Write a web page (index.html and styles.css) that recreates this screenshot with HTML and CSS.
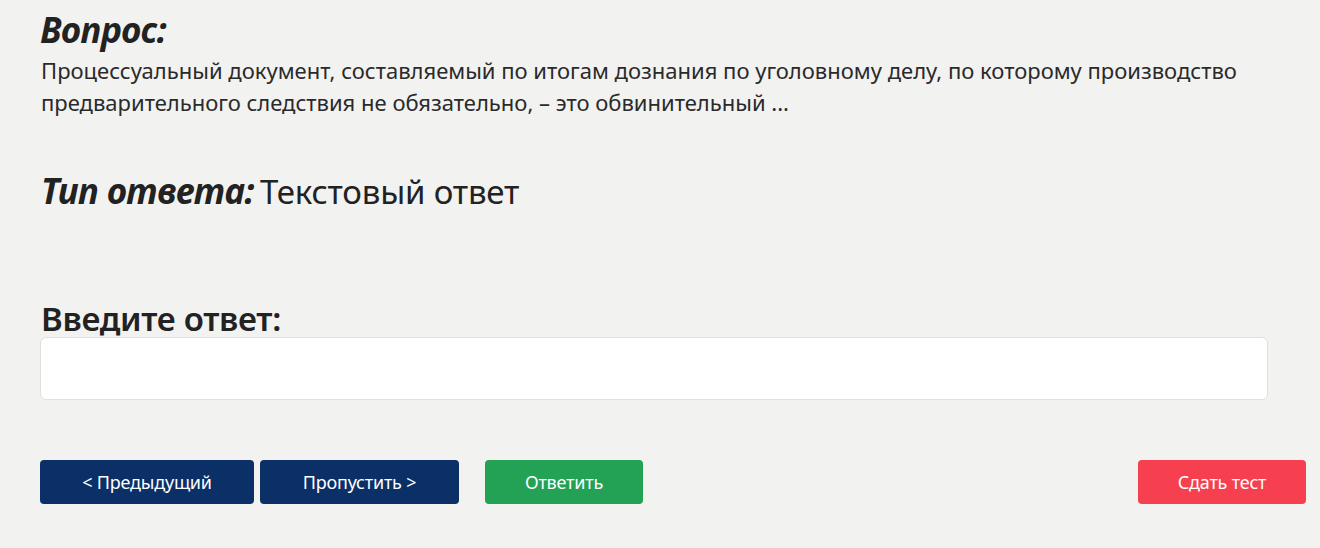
FILE: index.html
```html
<!DOCTYPE html>
<html lang="ru">
<head>
<meta charset="utf-8">
<link rel="stylesheet" href="styles.css">
</head>
<body>
<main class="page">
  <section class="question">
    <h2 class="label-italic">Вопрос:</h2>
    <p class="question-text">Процессуальный документ, составляемый по итогам дознания по уголовному делу, по которому производство предварительного следствия не обязательно, – это обвинительный ...</p>
  </section>
  <section class="type">
    <span class="label-italic">Тип ответа:</span><span class="type-value">Текстовый ответ</span>
  </section>
  <section class="answer">
    <label class="answer-label" for="ans">Введите ответ:</label>
    <input class="answer-input" id="ans" type="text">
  </section>
  <div class="actions">
    <button class="btn btn-navy btn-prev">&lt; Предыдущий</button>
    <button class="btn btn-navy btn-skip">Пропустить &gt;</button>
    <button class="btn btn-green btn-answer">Ответить</button>
    <button class="btn btn-red btn-finish">Сдать тест</button>
  </div>
</main>
</body>
</html>
```
FILE: styles.css
```css
* { box-sizing: border-box; }
html, body { margin: 0; padding: 0; }
body {
  background: #f2f2f1;
  color: #222;
  font-family: "Noto Sans", "Open Sans", sans-serif;
  width: 1320px;
  height: 548px;
  overflow: hidden;
}
.page {
  padding: 8px 14px 0 40px;
}
.label-italic {
  font-style: italic;
  font-weight: 700;
  font-size: 35px;
  margin: 0;
  line-height: 44px;
  letter-spacing: -0.5px;
}
.question-text {
  margin: 2px 0 0 1px;
  font-size: 22px;
  line-height: 32px;
  color: #2a2a2a;
  max-width: 1228px;
}
.type {
  margin-top: 51px;
  display: flex;
  align-items: baseline;
  height: 44px;
}
.type .label-italic { margin-left: 1px; }
.type-value {
  font-size: 33px;
  line-height: 44px;
  margin-left: 6px;
  letter-spacing: -0.2px;
}
.answer {
  margin-top: 86px;
  display: flex;
  flex-direction: column;
  width: 1228px;
}
.answer-label {
  font-size: 33px;
  font-weight: 600;
  line-height: 40px;
  margin-left: 1px;
  letter-spacing: -0.3px;
}
.answer-input {
  height: 63px;
  background: #fff;
  border: 1px solid #e0e0df;
  border-radius: 6px;
  margin-top: -2px;
  font-size: 20px;
  padding: 0 12px;
  outline: none;
}
.actions {
  margin-top: 60px;
  display: flex;
  gap: 6px;
}
.btn {
  height: 44px;
  border: none;
  border-radius: 4px;
  color: #fff;
  font-family: "Noto Sans", "Open Sans", sans-serif;
  font-size: 18px;
  letter-spacing: -0.2px;
  padding: 0;
}
.btn-navy { background: #0b3067; }
.btn-green { background: #23a256; }
.btn-red { background: #f6404f; }
.btn-prev { width: 214px; }
.btn-skip { width: 199px; }
.btn-answer { width: 158px; margin-left: 20px; }
.btn-finish { width: 168px; margin-left: auto; }
```
